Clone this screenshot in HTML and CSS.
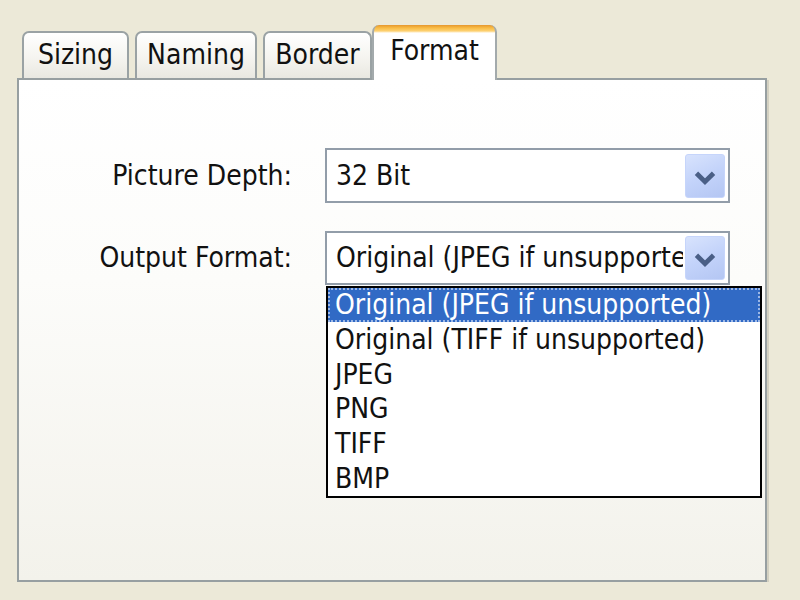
FILE: index.html
```html
<!DOCTYPE html>
<html>
<head>
<meta charset="utf-8">
<link rel="stylesheet" href="styles.css">
</head>
<body>
<div class="window">
  <div class="tabs">
    <div class="tab t-sizing">Sizing</div>
    <div class="tab t-naming">Naming</div>
    <div class="tab t-border">Border</div>
    <div class="tab active t-format">Format</div>
  </div>
  <div class="panel">
    <div class="row">
      <label class="label">Picture Depth:</label>
      <div class="combo">
        <span class="value">32 Bit</span>
        <span class="btn"><svg width="40" height="44" viewBox="0 0 40 44"><polyline points="11,18 20,27 29,18" fill="none" stroke="#4A5F86" stroke-width="5"/></svg></span>
      </div>
    </div>
    <div class="row">
      <label class="label">Output Format:</label>
      <div class="combo">
        <span class="value">Original (JPEG if unsupported)</span>
        <span class="btn"><svg width="40" height="44" viewBox="0 0 40 44"><polyline points="11,18 20,27 29,18" fill="none" stroke="#4A5F86" stroke-width="5"/></svg></span>
        <ul class="list">
          <li class="item selected">Original (JPEG if unsupported)</li>
          <li class="item">Original (TIFF if unsupported)</li>
          <li class="item">JPEG</li>
          <li class="item">PNG</li>
          <li class="item">TIFF</li>
          <li class="item">BMP</li>
        </ul>
      </div>
    </div>
  </div>
</div>
</body>
</html>
```

FILE: styles.css
```css
body {
  margin: 0;
  background: #ECE9D8;
  font-family: "DejaVu Sans Condensed", "DejaVu Sans", sans-serif;
  font-size: 28px;
  color: #111;
}

.window {
  padding: 25px 0 0 17px;
  width: 752px;
}

.tabs {
  display: flex;
  align-items: flex-end;
  gap: 6px;
  padding-left: 5px;
  height: 53px;
  position: relative;
  z-index: 2;
}

.tab {
  box-sizing: border-box;
  height: 47px;
  border: 2px solid #9AA2A4;
  border-bottom: 0;
  border-radius: 7px 7px 0 0;
  background: linear-gradient(#ffffff, #F4F3EE 60%, #E9E8E1);
  display: flex;
  justify-content: center;
  align-items: flex-start;
  padding-top: 5px;
  line-height: 33px;
}

.t-sizing { width: 107px; }
.t-naming { width: 122px; }
.t-border { width: 109px; }

.tab.active {
  width: 125px;
  height: 55px;
  margin-left: -6px;
  margin-bottom: -2px;
  border-top: 0;
  border-color: #A3AAAC;
  background: linear-gradient(#E5972E 0, #F9BC45 3px, #FDD172 6px, #ffffff 8px, #ffffff);
  padding-top: 9px;
}

.panel {
  box-sizing: border-box;
  width: 750px;
  height: 504px;
  border: 2px solid #979FA1;
  background: linear-gradient(#ffffff 0%, #FCFCFA 40%, #F3F2EB 100%);
  box-shadow: 2px 2px 0 #D3D0C1;
  padding-top: 68px;
  display: flex;
  flex-direction: column;
  gap: 27px;
}

.row {
  display: flex;
  align-items: center;
  height: 55px;
}

.label {
  width: 273px;
  margin-right: 33px;
  text-align: right;
  white-space: nowrap;
}

.combo {
  position: relative;
  box-sizing: border-box;
  width: 405px;
  height: 55px;
  border: 2px solid #929DA9;
  background: #fff;
  display: flex;
  align-items: center;
}

.row:nth-child(2) .combo {
  height: 54px;
}

.value {
  flex: 1;
  padding-left: 9px;
  white-space: nowrap;
  overflow: hidden;
}

.btn {
  box-sizing: border-box;
  width: 40px;
  height: 44px;
  margin: 0 3px 0 2px;
  border: 1px solid #C6D5FB;
  border-radius: 3px;
  background: linear-gradient(155deg, #D8E3FD 0%, #C3D3FA 50%, #B4C6F3 100%);
  display: flex;
}

.list {
  position: absolute;
  left: -1px;
  top: calc(100% + 3px);
  box-sizing: border-box;
  width: 436px;
  height: 212px;
  margin: 0;
  padding: 0;
  list-style: none;
  border: 2px solid #000;
  background: #fff;
  z-index: 3;
}

.item {
  height: 34.66px;
  display: flex;
  align-items: center;
  padding-left: 7px;
  white-space: nowrap;
}

.item.selected {
  background: #316AC5;
  color: #fff;
  outline: 2px dotted #9DB8E6;
  outline-offset: -2px;
}
```
